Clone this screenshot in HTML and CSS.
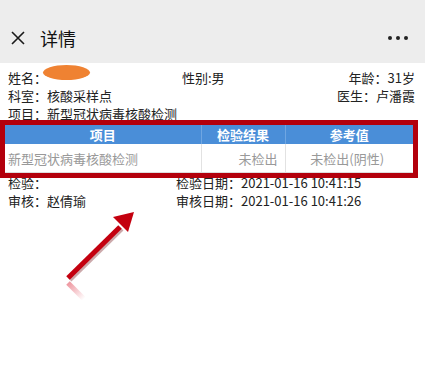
FILE: index.html
```html
<!DOCTYPE html>
<html lang="zh-CN">
<head>
  <meta charset="UTF-8">
  <meta name="viewport" content="width=device-width, initial-scale=1.0">
  <title>详情</title>
  <link rel="stylesheet" href="styles.css">
</head>
<body>
  <div class="nav">
    <svg class="close" width="16" height="16" viewBox="0 0 16 16">
      <path d="M2 2 L14 14 M14 2 L2 14" stroke="#1a1a1a" stroke-width="1.6" fill="none"/>
    </svg>
    <h1>详情</h1>
    <div class="more"><span></span><span></span><span></span></div>
  </div>

  <div class="info">
    <div class="row">
      <span>姓名：<i class="blot"></i></span>
      <span>性别:男</span>
      <span class="right">年龄：31岁</span>
    </div>
    <div class="row">
      <span>科室：核酸采样点</span>
      <span></span>
      <span class="right">医生：卢潘霞</span>
    </div>
    <div class="row">
      <span class="wide">项目：新型冠状病毒核酸检测</span>
    </div>
  </div>

  <table class="result">
    <colgroup>
      <col class="c1">
      <col class="c2">
      <col class="c3">
    </colgroup>
    <tr>
      <th>项目</th>
      <th>检验结果</th>
      <th class="last">参考值</th>
    </tr>
    <tr>
      <td class="left">新型冠状病毒核酸检测</td>
      <td class="num">未检出</td>
      <td class="last">未检出(阴性)</td>
    </tr>
  </table>

  <div class="sign">
    <div class="row2">
      <span>检验：</span>
      <span>检验日期：2021-01-16 10:41:15</span>
    </div>
    <div class="row2">
      <span>审核：赵倩瑜</span>
      <span>审核日期：2021-01-16 10:41:26</span>
    </div>
  </div>

  <!-- red arrow pointing at the table -->
  <svg class="arrow" width="90" height="100" viewBox="0 0 90 100">
    <defs>
      <linearGradient id="fade" x1="0" y1="0" x2="1" y2="1">
        <stop offset="0" stop-color="#e04050" stop-opacity="0.55"/>
        <stop offset="1" stop-color="#e04050" stop-opacity="0"/>
      </linearGradient>
    </defs>
    <path d="M8 72 L24 88" stroke="url(#fade)" stroke-width="5" fill="none"/>
    <path d="M8 67 L60 16" stroke="#6d0a0e" stroke-width="5.5" fill="none" transform="translate(1.5,1.5)" opacity="0.35"/>
    <path d="M8 67 L60 16" stroke="#c4000f" stroke-width="5" stroke-linecap="butt" fill="none"/>
    <polygon points="74,1 53,6 68,21" fill="#c4000f"/>
  </svg>
</body>
</html>
```

FILE: styles.css
```css
body {
  margin: 0;
  font-family: "Noto Sans CJK SC", "Noto Sans", sans-serif;
  background-color: #fff;
  color: #222;
  font-size: 13px;
  position: relative;
  width: 425px;
  height: 365px;
  overflow: hidden;
}

.nav {
  background-color: #ededed;
  height: 63px;
  display: flex;
  align-items: center;
  padding: 12px 10px 0 10px;
  box-sizing: border-box;
}

.nav .close {
  margin-right: 14px;
}

.nav h1 {
  margin: 0;
  font-size: 18px;
  font-weight: normal;
  color: #111;
  flex: 1;
}

.more {
  display: flex;
  gap: 4px;
  margin-right: 7px;
}

.more span {
  width: 4px;
  height: 4px;
  border-radius: 50%;
  background-color: #222;
}

.info {
  padding: 6px 10px 0 8px;
}

.row {
  display: grid;
  grid-template-columns: 174px 1fr auto;
  line-height: 18px;
  height: 18px;
}

.row .wide {
  grid-column: 1 / 4;
}

.row .right {
  text-align: right;
}

.blot {
  display: inline-block;
  width: 47px;
  height: 15px;
  border-radius: 50%;
  background-color: #ef8232;
  vertical-align: top;
  margin-top: -4px;
  margin-left: -4px;
}

.result {
  margin: 2px 0 0 5px;
  width: 408px;
  table-layout: fixed;
  border-collapse: collapse;
  outline: 5px solid #b3000c;
  position: relative;
  font-size: 13px;
}

.result .c1 {
  width: 196px;
}

.result .c2 {
  width: 84px;
}

.result th {
  background-color: #4a8ed8;
  color: #fff;
  height: 18px;
  padding: 0;
  font-weight: bold;
  border-right: 1px solid #6fa6e2;
}

.result td {
  height: 28px;
  padding: 0 7px 0 3px;
  color: #999;
  border-right: 1px solid #e2e2e2;
  border-bottom: 1px solid #ddd;
  text-align: center;
}

.result .last {
  border-right: none;
}

.result .left {
  text-align: left;
}

.result .num {
  text-align: right;
}

.sign {
  padding: 1px 10px 0 8px;
}

.row2 {
  display: grid;
  grid-template-columns: 168px 1fr;
  line-height: 18px;
}

.arrow {
  position: absolute;
  left: 60px;
  top: 211px;
}
```
